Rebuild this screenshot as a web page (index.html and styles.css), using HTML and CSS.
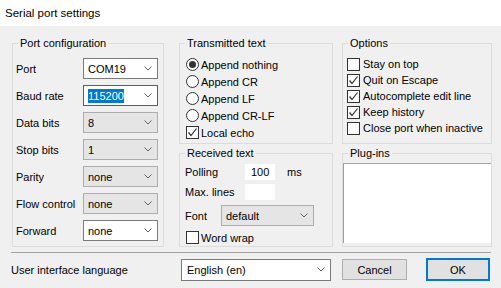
FILE: index.html
```html
<!DOCTYPE html>
<html lang="en">
<head>
    <meta charset="UTF-8">
    <title>Serial port settings</title>
    <link rel="stylesheet" href="styles.css">
</head>
<body>

    <div class="titlebar">Serial port settings</div>

    <div class="dialog">
        <div class="groups">

            <!-- Port configuration -->
            <fieldset class="group port">
                <legend>Port configuration</legend>
                <div class="form-grid">
                    <span>Port</span>
                    <div class="combo"><span>COM19</span><svg width="8" height="5"><polyline points="0.5,0.5 4,4 7.5,0.5"/></svg></div>
                    <span>Baud rate</span>
                    <div class="combo focus"><span class="sel">115200</span><svg width="8" height="5"><polyline points="0.5,0.5 4,4 7.5,0.5"/></svg></div>
                    <span>Data bits</span>
                    <div class="combo list"><span>8</span><svg width="8" height="5"><polyline points="0.5,0.5 4,4 7.5,0.5"/></svg></div>
                    <span>Stop bits</span>
                    <div class="combo list"><span>1</span><svg width="8" height="5"><polyline points="0.5,0.5 4,4 7.5,0.5"/></svg></div>
                    <span>Parity</span>
                    <div class="combo list"><span>none</span><svg width="8" height="5"><polyline points="0.5,0.5 4,4 7.5,0.5"/></svg></div>
                    <span>Flow control</span>
                    <div class="combo list"><span>none</span><svg width="8" height="5"><polyline points="0.5,0.5 4,4 7.5,0.5"/></svg></div>
                    <span>Forward</span>
                    <div class="combo"><span>none</span><svg width="8" height="5"><polyline points="0.5,0.5 4,4 7.5,0.5"/></svg></div>
                </div>
            </fieldset>

            <div class="col col-mid">
                <!-- Transmitted text -->
                <fieldset class="group transmit">
                    <legend>Transmitted text</legend>
                    <div class="group-body">
                        <div class="opt"><span class="radio on"></span>Append nothing</div>
                        <div class="opt"><span class="radio"></span>Append CR</div>
                        <div class="opt"><span class="radio"></span>Append LF</div>
                        <div class="opt"><span class="radio"></span>Append CR-LF</div>
                        <div class="opt"><span class="check on"><svg width="11" height="11"><polyline points="1.5,5.5 4,8.5 9.5,1.5"/></svg></span>Local echo</div>
                    </div>
                </fieldset>

                <!-- Received text -->
                <fieldset class="group received">
                    <legend>Received text</legend>
                    <div class="group-body">
                        <div class="field-row">
                            <span class="lbl-wide">Polling</span>
                            <div class="edit">100</div>
                            <span class="unit">ms</span>
                        </div>
                        <div class="field-row gap4">
                            <span class="lbl-wide">Max. lines</span>
                            <div class="edit"></div>
                        </div>
                        <div class="field-row gap5">
                            <span class="lbl-font">Font</span>
                            <div class="combo list font-combo"><span>default</span><svg width="8" height="5"><polyline points="0.5,0.5 4,4 7.5,0.5"/></svg></div>
                        </div>
                        <div class="opt gap5 short"><span class="check"></span>Word wrap</div>
                    </div>
                </fieldset>
            </div>

            <div class="col col-right">
                <!-- Options -->
                <fieldset class="group options">
                    <legend>Options</legend>
                    <div class="group-body">
                        <div class="opt wide"><span class="check"></span>Stay on top</div>
                        <div class="opt wide"><span class="check on"><svg width="11" height="11"><polyline points="1.5,5.5 4,8.5 9.5,1.5"/></svg></span>Quit on Escape</div>
                        <div class="opt wide"><span class="check on"><svg width="11" height="11"><polyline points="1.5,5.5 4,8.5 9.5,1.5"/></svg></span>Autocomplete edit line</div>
                        <div class="opt wide"><span class="check on"><svg width="11" height="11"><polyline points="1.5,5.5 4,8.5 9.5,1.5"/></svg></span>Keep history</div>
                        <div class="opt wide"><span class="check"></span>Close port when inactive</div>
                    </div>
                </fieldset>

                <!-- Plug-ins -->
                <fieldset class="group plugins">
                    <legend>Plug-ins</legend>
                    <div class="listbox"></div>
                </fieldset>
            </div>
        </div>

        <div class="separator"></div>

        <div class="footer">
            <span class="lang-label">User interface language</span>
            <div class="combo lang"><span>English (en)</span><svg width="8" height="5"><polyline points="0.5,0.5 4,4 7.5,0.5"/></svg></div>
            <div class="button cancel">Cancel</div>
            <div class="button ok">OK</div>
        </div>
    </div>

</body>
</html>
```

FILE: styles.css
```css
* {
    box-sizing: border-box;
}
body {
    margin: 0;
    width: 501px;
    height: 288px;
    overflow: hidden;
    background-color: #f0f0f0;
    font-family: "Liberation Sans", Arial, sans-serif;
    font-size: 11px;
    color: #000;
}
.titlebar {
    height: 26px;
    line-height: 26px;
    padding-left: 5px;
    background-color: #fff;
    font-size: 11.5px;
}
.dialog {
    padding: 10px 0 0 12px;
}
.groups {
    display: flex;
    height: 211px;
}
.col {
    display: flex;
    flex-direction: column;
    gap: 2px;
}
.col-mid {
    margin-left: 15px;
    width: 154px;
}
.col-right {
    margin-left: 9px;
    width: 150px;
}

/* group boxes */
.group {
    margin: 0;
    padding: 0;
    min-width: 0;
    border: 1px solid #dcdcdc;
}
.group legend {
    margin-left: 5px;
    padding: 0 2px;
    line-height: 15px;
}
.port {
    width: 152px;
}
.transmit {
    height: 108px;
}
.received {
    height: 101px;
}
.options {
    height: 108px;
}
.plugins {
    height: 101px;
}
.port .form-grid {
    padding: 7px 5px 0 3px;
}
.transmit .group-body {
    padding: 5px 0 0 6px;
}
.received .group-body {
    padding: 3px 0 0 5px;
}
.options .group-body {
    padding: 5px 0 0 4px;
}
.plugins .listbox {
    margin-top: 2px;
}

.form-grid {
    display: grid;
    grid-template-columns: 67px 75px;
    row-gap: 6px;
    align-items: center;
}

/* combo boxes */
.combo {
    display: flex;
    align-items: center;
    justify-content: space-between;
    height: 21px;
    padding: 0 5px 0 4px;
    background-color: #fff;
    border: 1px solid #7a7a7a;
}
.combo svg polyline {
    fill: none;
    stroke: #606060;
    stroke-width: 1;
}
.combo.list {
    background-color: #e5e5e5;
    border-color: #adadad;
}
.combo.focus {
    border-color: #0078d7;
}
.combo .sel {
    background-color: #0078d7;
    color: #fff;
    padding: 1px 0;
}

/* radios and checks */
.opt {
    display: flex;
    align-items: center;
    gap: 2px;
    height: 17px;
}
.opt.wide {
    height: 16px;
    gap: 3px;
}
.opt.short {
    height: 13px;
    padding-left: 1px;
}
.radio,
.check {
    display: flex;
    align-items: center;
    justify-content: center;
    width: 13px;
    height: 13px;
    flex: none;
    background-color: #fff;
    border: 1px solid #333;
}
.radio {
    border-radius: 50%;
}
.radio.on::after {
    content: "";
    width: 7px;
    height: 7px;
    border-radius: 50%;
    background-color: #333;
}
.check svg polyline {
    fill: none;
    stroke: #333;
    stroke-width: 1.2;
}

/* received text */
.field-row {
    display: flex;
    align-items: center;
}
.gap4 {
    margin-top: 4px;
}
.gap5 {
    margin-top: 5px;
}
.lbl-wide {
    width: 60px;
}
.lbl-font {
    width: 36px;
}
.edit {
    width: 30px;
    height: 16px;
    line-height: 16px;
    padding-left: 6px;
    background-color: #fff;
}
.unit {
    margin-left: 12px;
}
.font-combo {
    width: 93px;
}

.listbox {
    height: 80px;
    background-color: #fff;
    border-top: 1px solid #a0a0a0;
    border-left: 1px solid #a0a0a0;
}

/* footer */
.separator {
    width: 480px;
    margin: 5px 0 0 -1px;
    border-top: 1px solid #a0a0a0;
}
.footer {
    display: flex;
    align-items: center;
    height: 23px;
    margin: 5px 0 0 -1px;
}
.lang-label {
    width: 170px;
}
.combo.lang {
    width: 150px;
    height: 22px;
    padding-left: 5px;
}
.button {
    display: flex;
    align-items: center;
    justify-content: center;
    background-color: #e1e1e1;
    border: 1px solid #adadad;
}
.cancel {
    width: 65px;
    height: 21px;
    margin-left: 11px;
}
.ok {
    width: 64px;
    height: 23px;
    margin-left: 19px;
    border: 2px solid #0078d7;
}
```
